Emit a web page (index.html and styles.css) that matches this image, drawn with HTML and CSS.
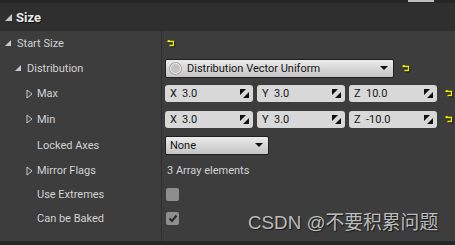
FILE: index.html
```html
<!DOCTYPE html>
<html lang="en">
<head>
    <meta charset="UTF-8">
    <title>Size</title>
    <link rel="stylesheet" href="styles.css">
</head>
<body>
    <div class="panel">
        <div class="top-strip"><div class="thumb"></div></div>
        <div class="category">
            <span class="tri-down"></span>
            <span class="cat-title">Size</span>
        </div>
        <div class="props">
            <div class="row">
                <div class="name lvl0"><span class="tri-down small"></span>Start Size</div>
                <div class="value">
                    <svg class="reset" viewBox="0 0 8 7"><path d="M0.5 1.5 L2.5 0 M1 1.5 H6.5 V5.5 H2.5" /></svg>
                </div>
            </div>
            <div class="row h26">
                <div class="name lvl1"><span class="tri-down small"></span>Distribution</div>
                <div class="value">
                    <div class="combo wide">
                        <span class="dot"></span>
                        <span class="combo-text">Distribution Vector Uniform</span>
                        <span class="caret"></span>
                    </div>
                    <svg class="reset" viewBox="0 0 8 7"><path d="M0.5 1.5 L2.5 0 M1 1.5 H6.5 V5.5 H2.5" /></svg>
                </div>
            </div>
            <div class="row h25">
                <div class="name lvl2"><svg class="tri-right" viewBox="0 0 7 10"><path d="M1 1 L6 5 L1 9 Z" /></svg>Max</div>
                <div class="value">
                    <div class="vec">
                        <div class="num"><b>X</b><span>3.0</span><svg class="drag" viewBox="0 0 9 9"><path d="M0 0 H6 L0 6 Z M9 3 V9 H3 Z" /></svg></div>
                        <div class="num"><b>Y</b><span>3.0</span><svg class="drag" viewBox="0 0 9 9"><path d="M0 0 H6 L0 6 Z M9 3 V9 H3 Z" /></svg></div>
                        <div class="num"><b>Z</b><span>10.0</span><svg class="drag" viewBox="0 0 9 9"><path d="M0 0 H6 L0 6 Z M9 3 V9 H3 Z" /></svg></div>
                    </div>
                    <svg class="reset" viewBox="0 0 8 7"><path d="M0.5 1.5 L2.5 0 M1 1.5 H6.5 V5.5 H2.5" /></svg>
                </div>
            </div>
            <div class="row h26">
                <div class="name lvl2"><svg class="tri-right" viewBox="0 0 7 10"><path d="M1 1 L6 5 L1 9 Z" /></svg>Min</div>
                <div class="value">
                    <div class="vec">
                        <div class="num"><b>X</b><span>3.0</span><svg class="drag" viewBox="0 0 9 9"><path d="M0 0 H6 L0 6 Z M9 3 V9 H3 Z" /></svg></div>
                        <div class="num"><b>Y</b><span>3.0</span><svg class="drag" viewBox="0 0 9 9"><path d="M0 0 H6 L0 6 Z M9 3 V9 H3 Z" /></svg></div>
                        <div class="num"><b>Z</b><span>-10.0</span><svg class="drag" viewBox="0 0 9 9"><path d="M0 0 H6 L0 6 Z M9 3 V9 H3 Z" /></svg></div>
                    </div>
                    <svg class="reset" viewBox="0 0 8 7"><path d="M0.5 1.5 L2.5 0 M1 1.5 H6.5 V5.5 H2.5" /></svg>
                </div>
            </div>
            <div class="row h26">
                <div class="name lvl2 plain">Locked Axes</div>
                <div class="value">
                    <div class="combo short">
                        <span class="combo-text">None</span>
                        <span class="caret"></span>
                    </div>
                </div>
            </div>
            <div class="row h25">
                <div class="name lvl2"><svg class="tri-right" viewBox="0 0 7 10"><path d="M1 1 L6 5 L1 9 Z" /></svg>Mirror Flags</div>
                <div class="value"><span class="info">3 Array elements</span></div>
            </div>
            <div class="row h23">
                <div class="name lvl2 plain">Use Extremes</div>
                <div class="value"><span class="check"></span></div>
            </div>
            <div class="row">
                <div class="name lvl2 plain">Can be Baked</div>
                <div class="value">
                    <span class="check">
                        <svg viewBox="0 0 10 10"><path d="M1.5 5.5 L4 8 L8.5 2.5" /></svg>
                    </span>
                </div>
            </div>
            <div class="row filler">
                <div class="name"></div>
                <div class="value"></div>
            </div>
        </div>
        <div class="bottom-strip"></div>
        <div class="watermark">CSDN @不要积累问题</div>
    </div>
</body>
</html>
```

FILE: styles.css
```css
* {
    margin: 0;
    padding: 0;
    box-sizing: border-box;
}
body {
    background-color: #3d3d3d;
    font-family: Roboto, "Noto Sans", sans-serif;
    font-size: 11px;
    color: #d2d2d2;
}
.panel {
    position: relative;
    width: 455px;
    height: 245px;
    display: flex;
    flex-direction: column;
    background-color: #3d3d3d;
    overflow: hidden;
}
.top-strip {
    height: 3px;
    background-color: #262626;
}
.thumb {
    width: 26px;
    height: 2px;
    margin-left: 408px;
    background-color: #bdbdbd;
}
.category {
    height: 28px;
    display: flex;
    align-items: center;
    padding-left: 5px;
    background-color: #2f2f2f;
}
.cat-title {
    font-size: 13px;
    font-weight: bold;
    color: #e6e6e6;
    margin-left: 4px;
    text-shadow: 1px 1px 0 #111;
}
.tri-down {
    width: 0;
    height: 0;
    border-left: 7px solid transparent;
    border-bottom: 7px solid #c8c8c8;
}
.tri-down.small {
    border-left-width: 6px;
    border-bottom-width: 6px;
    margin-right: 6px;
}
.tri-right {
    width: 7px;
    height: 10px;
    margin-right: 4px;
    fill: none;
    stroke: #c8c8c8;
    stroke-width: 1;
}
.props {
    flex: 1;
    display: flex;
    flex-direction: column;
}
.row {
    height: 24px;
    display: flex;
}
.row.h23 { height: 23px; }
.row.h25 { height: 25px; }
.row.h26 { height: 26px; }
.row.filler {
    flex: 1;
}
.name {
    width: 162px;
    display: flex;
    align-items: center;
    border-right: 1px solid #2e2e2e;
}
.lvl0 { padding-left: 5px; }
.lvl1 { padding-left: 15px; }
.lvl2 { padding-left: 26px; }
.lvl2.plain { padding-left: 37px; }
.value {
    flex: 1;
    display: flex;
    align-items: center;
    padding-left: 3px;
    gap: 6px;
}
.reset {
    width: 8px;
    height: 7px;
    fill: none;
    stroke: #f0ee00;
    stroke-width: 1.3;
    filter: drop-shadow(1px 1px 0 #111);
    margin-left: 2px;
}
.combo {
    height: 19px;
    display: flex;
    align-items: center;
    padding: 0 5px 0 4px;
    border: 1px solid #202020;
    border-radius: 2px;
    background: linear-gradient(#ebebeb, #c4c4c4);
    color: #151515;
    font-size: 11px;
}
.combo.wide {
    width: 229px;
}
.combo.short {
    width: 104px;
}
.dot {
    width: 11px;
    height: 11px;
    border-radius: 50%;
    border: 1.5px solid #ededed;
    background-color: #c4c4c4;
    box-shadow: 0 0 0 1px #a8a8a8;
    margin-right: 6px;
}
.combo-text {
    flex: 1;
}
.caret {
    width: 0;
    height: 0;
    border-left: 4px solid transparent;
    border-right: 4px solid transparent;
    border-top: 4px solid #111;
}
.vec {
    display: flex;
    gap: 4px;
}
.num {
    width: 88px;
    height: 17px;
    display: flex;
    align-items: center;
    padding: 0 4px 0 5px;
    border-radius: 3px;
    background-color: #d8d8d8;
    color: #161616;
}
.num b {
    font-weight: normal;
    width: 12px;
}
.num span {
    flex: 1;
}
.drag {
    width: 9px;
    height: 9px;
    fill: #0e0e0e;
}
.info {
    padding-left: 2px;
}
.check {
    width: 13px;
    height: 13px;
    border-radius: 2px;
    background-color: #8e8e8e;
    display: flex;
    align-items: center;
    justify-content: center;
    margin-left: 1px;
}
.check svg {
    width: 10px;
    height: 10px;
    fill: none;
    stroke: #2a2a2a;
    stroke-width: 2;
}
.bottom-strip {
    height: 4px;
    background-color: #262626;
}
.watermark {
    position: absolute;
    left: 248px;
    top: 207px;
    font-family: "Liberation Sans", "Noto Sans CJK SC", sans-serif;
    font-size: 18.8px;
    color: rgba(215, 215, 215, 0.85);
    text-shadow: 1px 1px 1px rgba(0, 0, 0, 0.6);
}
```
